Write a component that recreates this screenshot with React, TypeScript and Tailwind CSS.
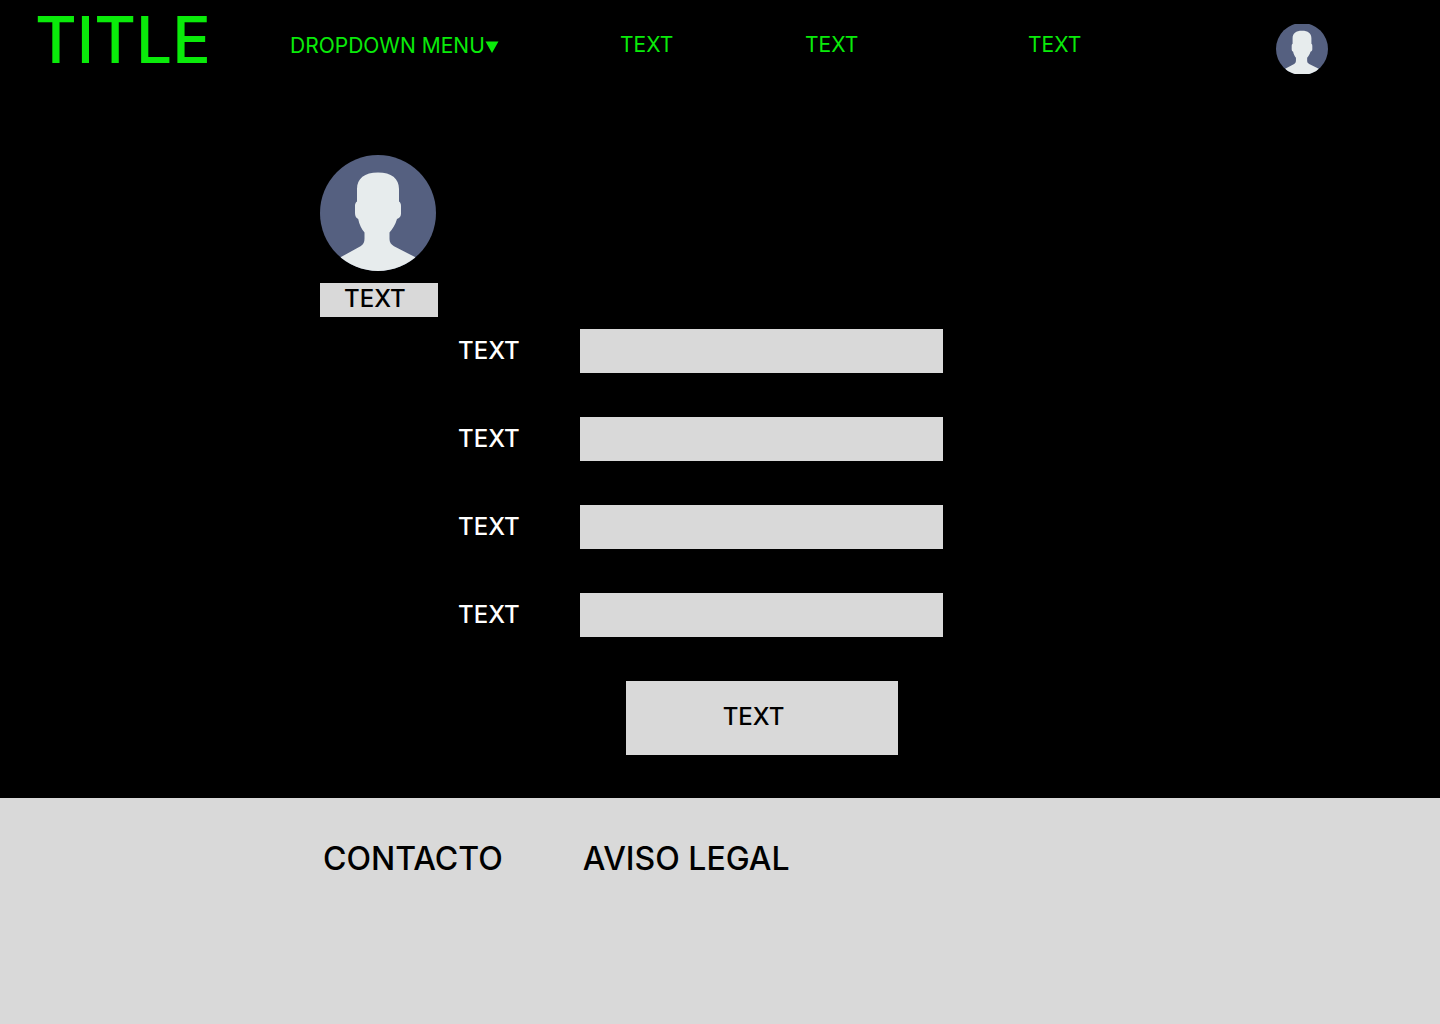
import { useId } from "react";

function Avatar({ className, label }: { className: string; label: string }) {
  const clip = useId();
  return (
    <svg viewBox="0 0 116 116" className={className} role="img" aria-label={label}>
      <clipPath id={clip}>
        <circle cx="58" cy="58" r="58" />
      </clipPath>
      <g clipPath={`url(#${clip})`}>
        <rect width="116" height="116" fill="#556080" />
        <path
          fill="#e7eced"
          d="M58 17.5C44.500 17.500 37 23.500 37 34V46.500C35.500 47.500 35 49 35 51V58C35 61 36 63 38.200 64C39.300 69.500 41.500 74 44.500 77.500V83.500C44.500 87 43.500 89.500 40.500 91.200L20.500 102.300V116H95.500V102.300L74 91.200C71 89.500 69.500 87.500 69.500 84V77.500C72.500 74 75.500 69.500 77 64C80 63 81 61 81 58.500V51C81 49 80.500 47.500 79 46.500V34C79 23.500 71.500 17.500 58 17.500Z"
        />
      </g>
    </svg>
  );
}

/* Round picture for the header, slightly cut off at its top and bottom edges. */
function HeaderAvatar() {
  return (
    <span className="flex h-[50px] w-[52px] items-center overflow-hidden">
      <Avatar className="size-[52px] shrink-0" label="Profile" />
    </span>
  );
}

const fields = ["first", "second", "third", "fourth"];

export default function App() {
  return (
    <div className="flex min-h-screen flex-col bg-black font-['Inter',sans-serif] text-2xl font-medium text-white">
      <header className="grid h-[98px] grid-cols-[255fr_330fr_185fr_223fr_248fr_164fr] pl-[35px] text-[21px] font-normal text-[#0aeb0a]">
        <h1 className="pt-2 text-[64px] leading-[64px] font-medium">TITLE</h1>
        <div className="relative mt-8 justify-self-start">
          <select aria-label="Dropdown menu" className="block h-7 appearance-none bg-black pr-3.5 leading-7 outline-none">
            <option>DROPDOWN MENU</option>
          </select>
          <svg viewBox="0 0 14 12" className="pointer-events-none absolute top-[9px] right-0 h-3 w-3.5" fill="currentColor" aria-hidden="true">
            <path d="M0.500 0.500H13.500L7 12Z" />
          </svg>
        </div>
        <a href="#one" className="mt-[31px] justify-self-start leading-7">TEXT</a>
        <a href="#two" className="mt-[31px] justify-self-start leading-7">TEXT</a>
        <a href="#three" className="mt-[31px] justify-self-start leading-7">TEXT</a>
        <a href="#profile" className="mt-6 justify-self-start">
          <HeaderAvatar />
        </a>
      </header>

      <main className="pt-[57px] pb-[43px] pl-80">
        <Avatar className="size-[116px]" label="User picture" />
        <button type="button" className="mt-3 block h-[34px] w-[118px] bg-[#d9d9d9] pb-0.5 pl-6 text-left leading-8 text-black">
          TEXT
        </button>
        <form className="mt-3 flex max-w-[623px] flex-col gap-11 pl-[138px]">
          {fields.map((name) => (
            <div key={name} className="flex items-center">
              <label htmlFor={name} className="w-[122px] shrink-0">TEXT</label>
              <input id={name} name={name} type="text" className="h-11 w-full min-w-0 bg-[#d9d9d9] px-3 text-black" />
            </div>
          ))}
          <div className="flex justify-center pl-[122px]">
            <button type="button" className="h-[74px] w-[272px] bg-[#d9d9d9] pr-4 pb-0.5 text-black">TEXT</button>
          </div>
        </form>
      </main>

      <footer className="flex grow gap-20 bg-[#d9d9d9] pt-10 pl-[323px] text-[32px] leading-[42px] text-black">
        <a href="#contacto" className="self-start">CONTACTO</a>
        <a href="#aviso-legal" className="self-start">AVISO LEGAL</a>
      </footer>
    </div>
  );
}
